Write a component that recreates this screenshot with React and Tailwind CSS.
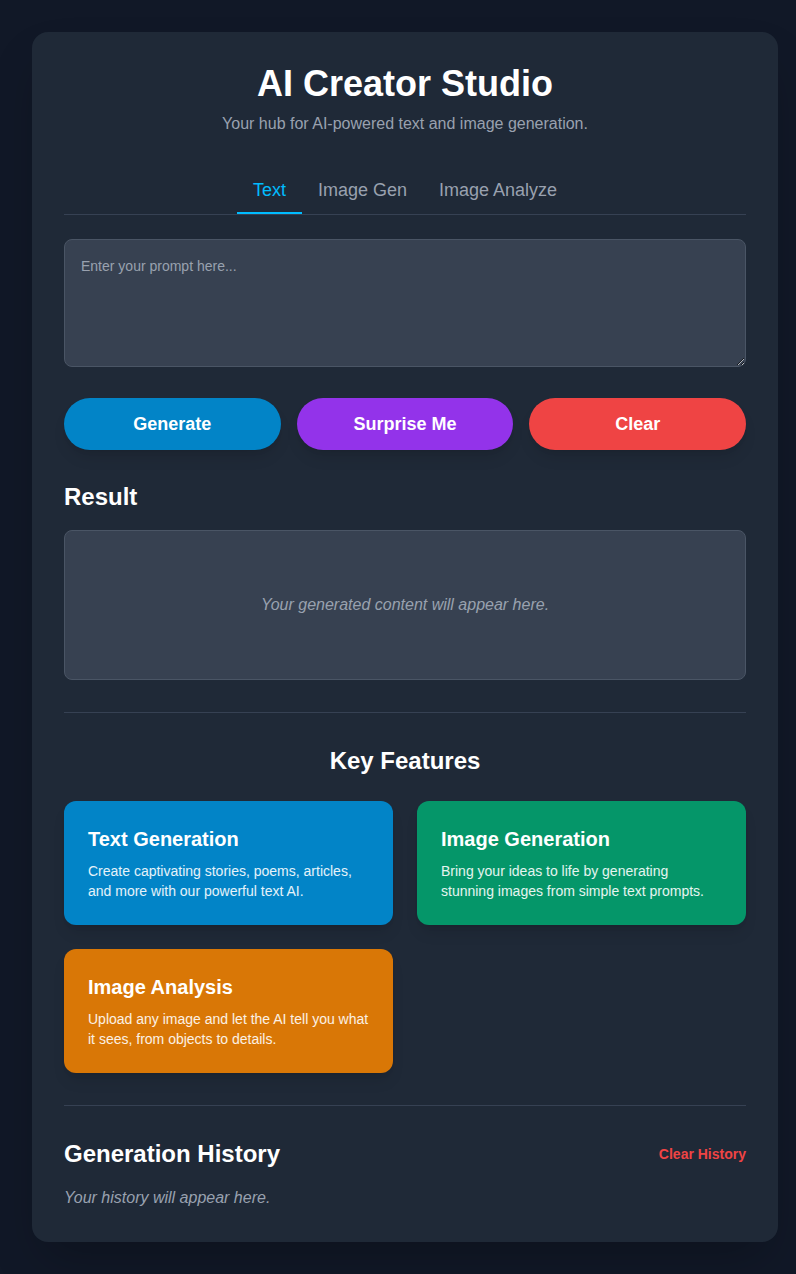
import React from "react";

export default function App() {
  return (
    <div
      className="min-h-screen bg-[#111827] p-8"
      style={{ fontFamily: '"Liberation Sans", Arial, sans-serif' }}
    >
      <div className="w-[746px] rounded-2xl bg-[#1f2937] p-8 shadow-2xl">
        <h1 className="text-center text-4xl font-bold text-white">AI Creator Studio</h1>
        <p className="mt-2 text-center text-base text-gray-400">
          Your hub for AI-powered text and image generation.
        </p>

        <div className="mt-8 flex justify-center border-b border-gray-700">
          <button className="border-b-2 border-sky-400 px-4 py-2 text-lg text-sky-400">Text</button>
          <button className="border-b-2 border-transparent px-4 py-2 text-lg text-gray-400">Image Gen</button>
          <button className="border-b-2 border-transparent px-4 py-2 text-lg text-gray-400">Image Analyze</button>
        </div>

        <textarea
          className="mt-6 block h-32 w-full rounded-lg border border-gray-600 bg-[#374151] p-4 text-sm text-white placeholder-gray-400 outline-none"
          placeholder="Enter your prompt here..."
        />

        <div className="mt-[31px] grid grid-cols-3 gap-4">
          <button className="rounded-full bg-[#0284c7] py-3 text-lg font-bold text-white shadow-lg">Generate</button>
          <button className="rounded-full bg-[#9333ea] py-3 text-lg font-bold text-white shadow-lg">Surprise Me</button>
          <button className="rounded-full bg-[#ef4444] py-3 text-lg font-bold text-white shadow-lg">Clear</button>
        </div>

        <h2 className="mt-[31px] text-2xl font-bold text-white">Result</h2>
        <div className="mt-[17px] flex h-[150px] items-center justify-center rounded-lg border border-gray-600 bg-[#374151]">
          <p className="text-base italic text-gray-400">Your generated content will appear here.</p>
        </div>

        <hr className="my-8 border-gray-700" />

        <h2 className="mb-6 text-center text-2xl font-bold text-white">Key Features</h2>
        <div className="grid grid-cols-2 gap-6">
          <div className="rounded-xl bg-[#0284c7] p-6 shadow-lg">
            <h3 className="mb-2 text-xl font-bold text-white">Text Generation</h3>
            <p className="text-sm text-white/90">
              Create captivating stories, poems, articles, and more with our powerful text AI.
            </p>
          </div>
          <div className="rounded-xl bg-[#059669] p-6 shadow-lg">
            <h3 className="mb-2 text-xl font-bold text-white">Image Generation</h3>
            <p className="text-sm text-white/90">
              Bring your ideas to life by generating stunning images from simple text prompts.
            </p>
          </div>
          <div className="rounded-xl bg-[#d97706] p-6 shadow-lg">
            <h3 className="mb-2 text-xl font-bold text-white">Image Analysis</h3>
            <p className="text-sm text-white/90">
              Upload any image and let the AI tell you what it sees, from objects to details.
            </p>
          </div>
        </div>

        <hr className="my-8 border-gray-700" />

        <div className="mb-4 flex items-center justify-between">
          <h2 className="text-2xl font-bold text-white">Generation History</h2>
          <button className="text-sm font-bold text-[#ef4444]">Clear History</button>
        </div>
        <p className="text-base italic text-gray-400">Your history will appear here.</p>
      </div>
    </div>
  );
}
